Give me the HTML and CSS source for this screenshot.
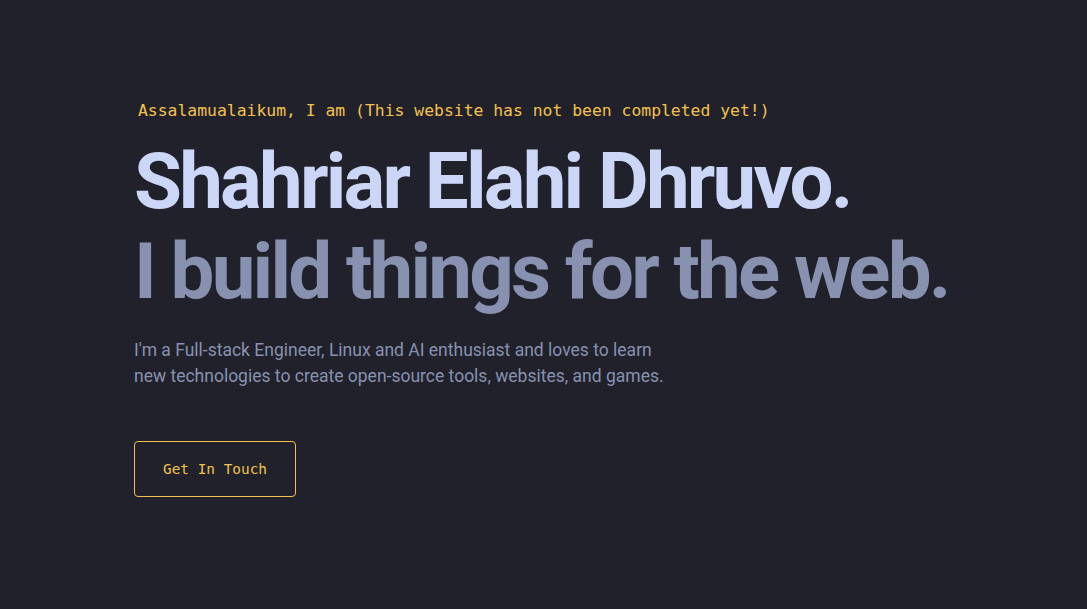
FILE: index.html
```html
<!DOCTYPE html>
<html lang="en">
<head>
<meta charset="utf-8">
<title>Shahriar Elahi Dhruvo</title>
<link rel="stylesheet" href="styles.css">
</head>
<body>
<main class="page">
  <section class="hero">
    <h1 class="greet">Assalamualaikum, I am (This website has not been completed yet!)</h1>
    <h2 class="name">Shahriar Elahi Dhruvo.</h2>
    <h3 class="tag">I build things for the web.</h3>
    <p class="intro">I'm a Full-stack Engineer, Linux and AI enthusiast and loves to learn new technologies to create open-source tools, websites, and games.</p>
    <a class="cta" href="#">Get In Touch</a>
  </section>
</main>
</body>
</html>
```
FILE: styles.css
```css
html, body {
  margin: 0;
  padding: 0;
  background: #20212b;
}
body {
  font-family: Roboto, "Noto Sans", sans-serif;
  color: #8892b0;
}
.page {
  height: 609px;
  padding: 0 134px;
  box-sizing: border-box;
}
.hero {
  display: flex;
  flex-direction: column;
  align-items: flex-start;
  padding-top: 100px;
}
.greet {
  margin: 0 0 17px 4px;
  font-family: "DejaVu Sans Mono", "Liberation Mono", monospace;
  font-weight: 400;
  font-size: 16.4px;
  line-height: 22px;
  color: #f4c14e;
}
.name, .tag {
  margin: 0;
  font-size: 78px;
  font-weight: 700;
  line-height: 1.1;
  letter-spacing: -2.8px;
  white-space: nowrap;
}
.name { color: #ccd6f6; }
.tag { color: #8892b0; margin-top: 4px; }
.intro {
  margin: 22px 0 0;
  max-width: 540px;
  font-size: 17.5px;
  line-height: 26px;
  color: #8892b0;
}
.cta {
  margin-top: 52px;
  display: inline-block;
  padding: 20px 28px;
  border: 1px solid #f4c14e;
  border-radius: 4px;
  font-family: "DejaVu Sans Mono", "Liberation Mono", monospace;
  font-size: 14.4px;
  line-height: 14px;
  color: #f4c14e;
  text-decoration: none;
}
```
